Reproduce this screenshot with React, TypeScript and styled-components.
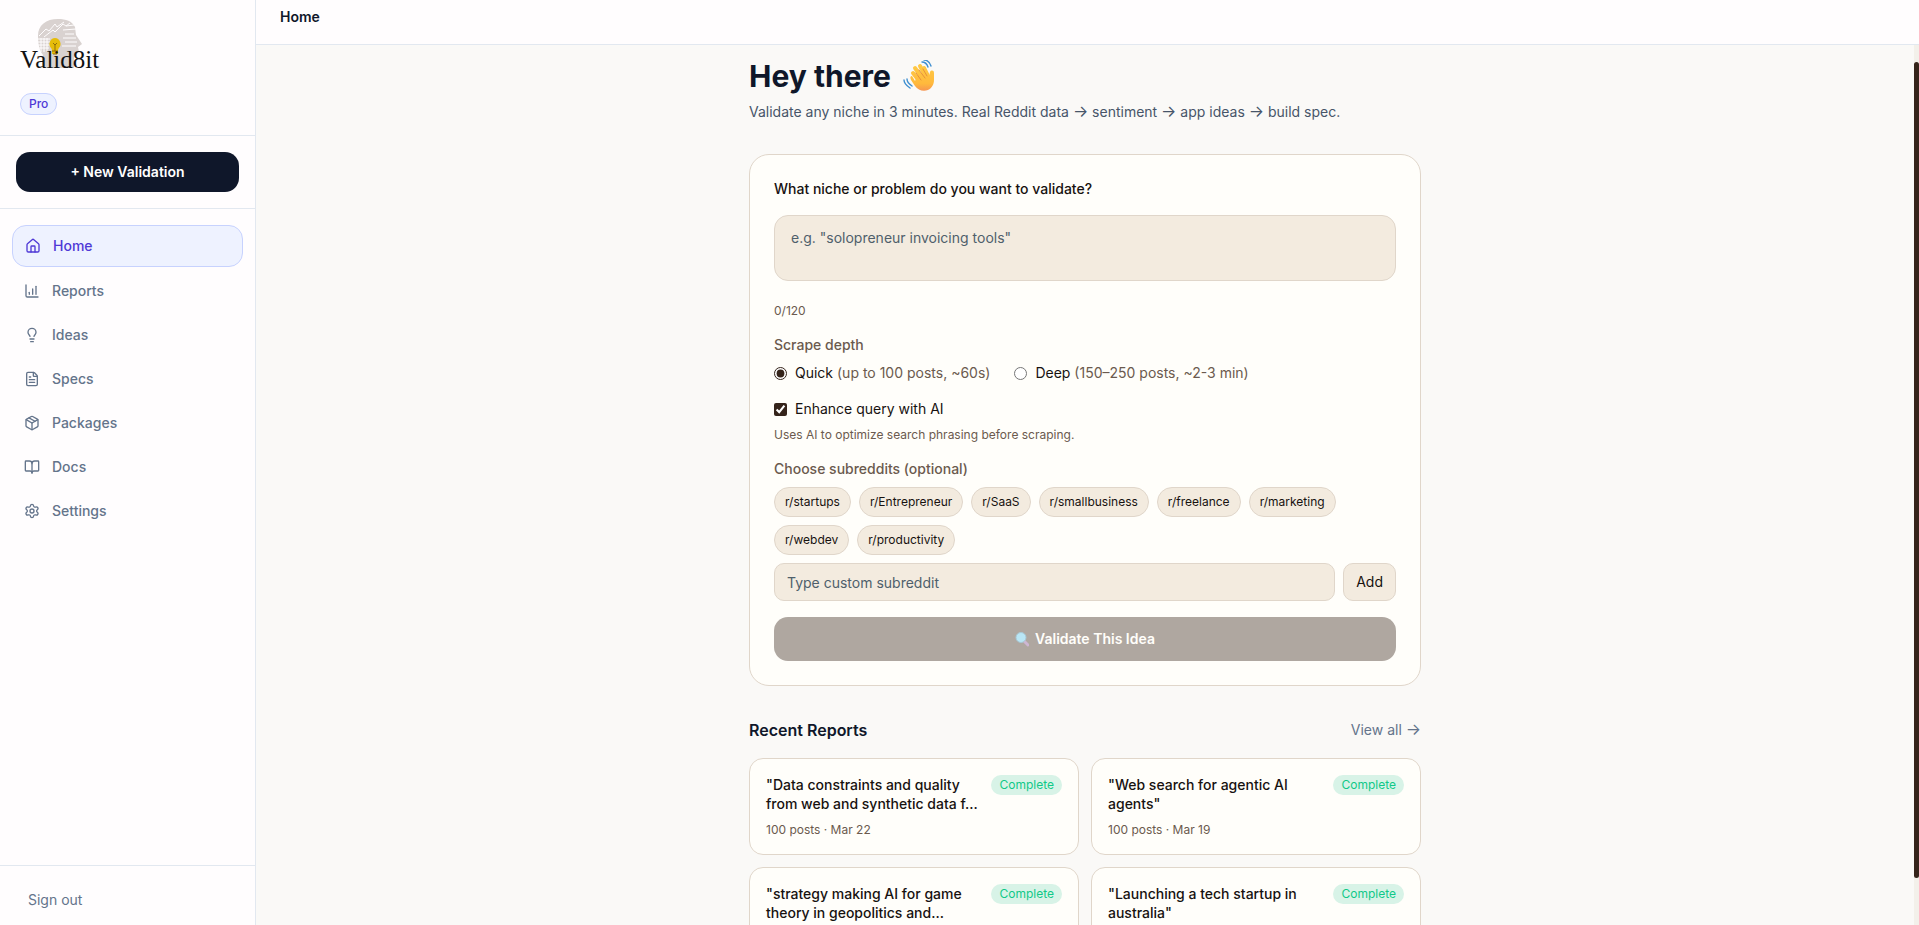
import React, { useState } from "react";
import styled, { createGlobalStyle, css } from "styled-components";
import { House, ChartColumnIncreasing, Lightbulb, FileText, Package, BookOpen, Settings } from "lucide-react";

const c = {
  page: "#faf9f7",
  panel: "#fffdfe",
  line: "#e2e8f0",
  navy: "#0f172a",
  slate: "#64748b",
  slateDark: "#475569",
  indigo: "#4f39d6",
  indigoSoft: "#eef2ff",
  indigoLine: "#c7d2fe",
  card: "#fffefa",
  cardLine: "#e0d6ca",
  sand: "#f3ebdf",
  ink: "#171210",
  brown: "#6b5a4e",
  espresso: "#35241a",
};

const Global = createGlobalStyle`
  *, *::before, *::after { box-sizing: border-box; }
  body { margin: 0; font-family: Inter, "Liberation Sans", sans-serif; font-size: 14px; line-height: 20px; color: ${c.ink}; background: ${c.page}; }
  button, input, textarea { font: inherit; color: inherit; margin: 0; }
  button { cursor: pointer; }
  a { text-decoration: none; color: inherit; }
  h1, h2, h3, p, fieldset { margin: 0; padding: 0; border: 0; min-width: 0; }
`;

const Shell = styled.div`
  display: flex;
  height: 100vh;
  overflow: hidden;
`;
const Sidebar = styled.aside`
  display: flex;
  flex-direction: column;
  flex: 0 0 256px;
  background: ${c.panel};
  border-right: 1px solid ${c.line};
`;
const Brand = styled.div`
  display: flex;
  flex-direction: column;
  align-items: flex-start;
  gap: 16px;
  padding: 16px 20px 20px;
  border-bottom: 1px solid ${c.line};
`;
const LogoSvg = styled.svg`
  display: block;
  width: 80px;
  height: 61px;
  overflow: visible;
`;
const Plan = styled.span`
  padding: 1px 8px;
  border: 1px solid ${c.indigoLine};
  border-radius: 11px;
  background: ${c.indigoSoft};
  color: ${c.indigo};
  font-size: 12px;
  line-height: 18px;
  font-weight: 500;
`;
const NewWrap = styled.div`
  padding: 16px;
  border-bottom: 1px solid ${c.line};
`;
const NewButton = styled.button`
  width: 100%;
  height: 40px;
  border: 0;
  border-radius: 14px;
  background: ${c.navy};
  color: #fff;
  font-weight: 600;
`;
const Nav = styled.nav`
  display: flex;
  flex-direction: column;
  flex: 1;
  gap: 4px;
  padding: 16px 12px;
`;
const NavItem = styled.a<{ $active?: boolean }>`
  display: flex;
  align-items: center;
  gap: 12px;
  padding: 10px 12px;
  border-radius: 14px;
  font-weight: 500;
  color: ${c.slate};
  ${(p) => p.$active && css`
    color: ${c.indigo};
    background: ${c.indigoSoft};
    border: 1px solid ${c.indigoLine};
  `}
`;
const SidebarFoot = styled.div`
  padding: 16px 16px 7px;
  border-top: 1px solid ${c.line};
`;
const SignOut = styled.button`
  padding: 8px 12px;
  border: 0;
  background: none;
  color: ${c.slate};
`;

const Main = styled.div`
  display: flex;
  flex-direction: column;
  flex: 1;
  min-width: 0;
`;
const TopBar = styled.header`
  padding: 7px 24px 17px;
  background: ${c.panel};
  border-bottom: 1px solid ${c.line};
  color: ${c.navy};
  font-weight: 600;
`;
const Viewport = styled.div`
  display: flex;
  flex: 1;
  min-height: 0;
`;
const Scroller = styled.main`
  flex: 1;
  min-width: 0;
  overflow-y: auto;
  scrollbar-width: none;
`;
const Track = styled.div`
  flex: 0 0 5px;
  padding: 17px 0 47px;
  background: #f3f0ea;
`;
const Thumb = styled.div`
  height: 100%;
  border-radius: 3px;
  background: ${c.espresso};
`;
const Column = styled.div`
  max-width: 672px;
  margin: 0 auto;
  padding: 13px 0 32px;
`;
const Title = styled.h1`
  display: flex;
  align-items: center;
  gap: 12px;
  font-size: 30px;
  line-height: 36px;
  font-weight: 700;
  color: ${c.navy};
`;
const Lead = styled.p`
  margin-top: 8px;
  color: ${c.slateDark};
`;
const Arrow = styled.span`
  font-size: 16px;
  line-height: 16px;
`;
const FormCard = styled.form`
  display: flex;
  flex-direction: column;
  margin-top: 32px;
  padding: 24px;
  border: 1px solid ${c.cardLine};
  border-radius: 20px;
  background: ${c.card};
`;
const Question = styled.label`
  font-weight: 500;
`;
const field = css`
  border: 1px solid ${c.cardLine};
  background: ${c.sand};
  outline: 0;
  &::placeholder { color: #4f5f6b; opacity: 1; }
`;
const NicheBox = styled.textarea`
  ${field}
  display: block;
  width: 100%;
  height: 66px;
  margin-top: 16px;
  padding: 12px 16px;
  border-radius: 14px;
  resize: none;
`;
const Small = styled.p<{ $top: number }>`
  margin-top: ${(p) => p.$top}px;
  font-size: 12px;
  line-height: 16px;
  color: ${c.brown};
`;
const Group = styled.fieldset`
  margin-top: 16px;
`;
const GroupName = styled.legend`
  padding: 0;
  margin-bottom: 8px;
  font-weight: 500;
  color: ${c.brown};
`;
const Options = styled.div`
  display: flex;
  gap: 24px;
`;
const Option = styled.label`
  display: flex;
  align-items: center;
  gap: 8px;
`;
const Hint = styled.span`
  color: ${c.brown};
`;
const EnhanceRow = styled(Option)`
  margin-top: 16px;
`;
const Tick = styled.input`
  width: 13px;
  height: 13px;
  accent-color: ${c.espresso};
`;
const Chips = styled.div`
  display: flex;
  flex-wrap: wrap;
  gap: 8px;
`;
const Chip = styled.button`
  padding: 6px 10px;
  border: 1px solid ${c.cardLine};
  border-radius: 15px;
  background: ${c.sand};
  font-size: 12px;
  line-height: 16px;
`;
const CustomRow = styled.div`
  display: flex;
  gap: 8px;
  margin-top: 8px;
`;
const CustomInput = styled.input`
  ${field}
  flex: 1;
  min-width: 0;
  height: 38px;
  padding: 8px 12px;
  border-radius: 10px;
`;
const AddButton = styled.button`
  padding: 8px 12px;
  border: 1px solid ${c.cardLine};
  border-radius: 10px;
  background: ${c.sand};
`;
const Submit = styled.button`
  display: flex;
  align-items: center;
  justify-content: center;
  gap: 6px;
  height: 44px;
  margin-top: 16px;
  border: 0;
  border-radius: 14px;
  background: #afa7a0;
  color: #fffefa;
  font-weight: 600;
`;
const SectionHead = styled.div`
  display: flex;
  align-items: center;
  justify-content: space-between;
  margin-top: 32px;
`;
const SectionTitle = styled.h2`
  font-size: 16px;
  line-height: 24px;
  font-weight: 600;
  color: ${c.navy};
`;
const ViewAll = styled.a`
  color: ${c.slate};
`;
const Reports = styled.div`
  display: grid;
  grid-template-columns: 1fr 1fr;
  gap: 12px;
  margin-top: 16px;
`;
const Report = styled.a`
  padding: 16px;
  border: 1px solid ${c.cardLine};
  border-radius: 14px;
  background: ${c.card};
`;
const ReportTop = styled.div`
  display: flex;
  align-items: flex-start;
  justify-content: space-between;
  gap: 8px;
`;
const ReportTitle = styled.h3`
  font-size: 14px;
  line-height: 19px;
  font-weight: 500;
`;
const Badge = styled.span`
  padding: 2px 8px;
  border-radius: 10px;
  background: #d8f3e7;
  color: #10c988;
  font-size: 12px;
  line-height: 16px;
`;
const Meta = styled.p`
  margin-top: 8px;
  font-size: 12px;
  line-height: 17px;
  color: ${c.brown};
`;

function Logo() {
  return (
    <LogoSvg viewBox="0 0 80 61" role="img" aria-label="Valid8it">
      <path d="M18 20C18 9 26 3 38 3c8 0 14 2 17 8l1 8 6 9-4 3 1 5-5 4v12H24c-3-3-2-10-1-13-4-5-5-12-5-19z" fill="#d9d2d0" />
      <g stroke="#fffdfe" strokeWidth="1" fill="none">
        <path d="M19 20l7-7 3 2 6-7 2 3 7-5M24 21l9-7 2 2 8-8 3 2 4-3M46 10l8-1M43 14l13-1M45 18l9 0M43 22h13M45 26h12M42 30h14" />
        <path d="M18 23h12M18 26h12M18 29h12M19 32h10M21 22v14M24 22v14M27 22v14" />
      </g>
      <path d="M35 22a6 6 0 0 1 4 10c-1 1-1 2-1 6h-6c0-4 0-5-1-6a6 6 0 0 1 4-10z" fill="#e6bd0a" />
      <path d="M33 27l2 2 2-2M35 29v6M32 35h6M33 38h4" stroke="#8f6e08" strokeWidth="1" fill="none" />
      <text x="0" y="52" fontFamily="'Liberation Serif', serif" fontSize="25" fill="#111">Valid8it</text>
    </LogoSvg>
  );
}

function Wave() {
  return (
    <svg width="32" height="32" viewBox="0 0 32 32" aria-hidden="true">
      <defs>
        <linearGradient id="hand" gradientUnits="userSpaceOnUse" x1="0" y1="4" x2="0" y2="32">
          <stop offset="0" stopColor="#ffcb45" />
          <stop offset="0.7" stopColor="#ffb93c" />
          <stop offset="1" stopColor="#f59055" />
        </linearGradient>
      </defs>
      <g stroke="url(#hand)" strokeWidth="4" strokeLinecap="round">
        <path d="M10 13l7 9M12 8l8 11M17 6l7 13M21 8l5 10" />
      </g>
      <path d="M9 16c-2 0-2 2-1 4l4 6c3 4 8 6 13 4 4-2 6-6 6-10V13c0-3-3-3-4-1l-1 5-11-3-3 7z" fill="url(#hand)" />
      <path d="M13 13l5 7M16 10l6 8M20 9l4 7" stroke="#e8923a" strokeWidth="1" fill="none" strokeLinecap="round" />
      <path d="M19 2c3 0 5 2 6 5M21 0c4 0 6 3 7 6M4 19c0 3 2 5 5 7M1 20c0 4 3 6 6 8" stroke="#3f8fd0" strokeWidth="1.4" fill="none" strokeLinecap="round" />
    </svg>
  );
}

function Lens() {
  return (
    <svg width="14" height="16" viewBox="0 0 14 16" aria-hidden="true">
      <path d="M9 10l4 4" stroke="#cdb6d2" strokeWidth="3" strokeLinecap="round" />
      <circle cx="6" cy="6.500" r="5" fill="#b9e6f5" stroke="#a9c9d6" />
    </svg>
  );
}

const navItems = [
  { name: "Home", Icon: House },
  { name: "Reports", Icon: ChartColumnIncreasing },
  { name: "Ideas", Icon: Lightbulb },
  { name: "Specs", Icon: FileText },
  { name: "Packages", Icon: Package },
  { name: "Docs", Icon: BookOpen },
  { name: "Settings", Icon: Settings },
];
const subs = ["startups", "Entrepreneur", "SaaS", "smallbusiness", "freelance", "marketing", "webdev", "productivity"];
const reports = [
  { title: '"Data constraints and quality from web and synthetic data f…', meta: "100 posts · Mar 22" },
  { title: '"Web search for agentic AI agents"', meta: "100 posts · Mar 19" },
  { title: '"strategy making AI for game theory in geopolitics and…', meta: "100 posts · Mar 18" },
  { title: '"Launching a tech startup in australia"', meta: "100 posts · Mar 17" },
];

export default function App() {
  const [niche, setNiche] = useState("");
  const [depth, setDepth] = useState("quick");
  const [enhance, setEnhance] = useState(true);
  return (
    <>
      <Global />
      <Shell>
        <Sidebar>
          <Brand>
            <Logo />
            <Plan>Pro</Plan>
          </Brand>
          <NewWrap><NewButton type="button">+ New Validation</NewButton></NewWrap>
          <Nav>
            {navItems.map(({ name, Icon }, i) => (
              <NavItem key={name} href={`#${name.toLowerCase()}`} $active={i === 0}>
                <Icon size={16} />
                {name}
              </NavItem>
            ))}
          </Nav>
          <SidebarFoot><SignOut type="button">Sign out</SignOut></SidebarFoot>
        </Sidebar>
        <Main>
          <TopBar>Home</TopBar>
          <Viewport>
            <Scroller>
              <Column>
                <Title>Hey there <Wave /></Title>
                <Lead>
                  Validate any niche in 3 minutes. Real Reddit data <Arrow>→</Arrow> sentiment <Arrow>→</Arrow> app ideas <Arrow>→</Arrow> build spec.
                </Lead>
                <FormCard onSubmit={(e) => e.preventDefault()}>
                  <Question htmlFor="niche">What niche or problem do you want to validate?</Question>
                  <NicheBox id="niche" rows={2} maxLength={120} value={niche} onChange={(e) => setNiche(e.target.value)} placeholder={'e.g. "solopreneur invoicing tools"'} />
                  <Small $top={22}>{niche.length}/120</Small>
                  <Group>
                    <GroupName>Scrape depth</GroupName>
                    <Options>
                      <Option>
                        <Tick type="radio" name="depth" checked={depth === "quick"} onChange={() => setDepth("quick")} />
                        <span>Quick <Hint>(up to 100 posts, ~60s)</Hint></span>
                      </Option>
                      <Option>
                        <Tick type="radio" name="depth" checked={depth === "deep"} onChange={() => setDepth("deep")} />
                        <span>Deep <Hint>(150–250 posts, ~2-3 min)</Hint></span>
                      </Option>
                    </Options>
                  </Group>
                  <EnhanceRow>
                    <Tick type="checkbox" checked={enhance} onChange={(e) => setEnhance(e.target.checked)} />
                    Enhance query with AI
                  </EnhanceRow>
                  <Small $top={8}>Uses AI to optimize search phrasing before scraping.</Small>
                  <Group>
                    <GroupName>Choose subreddits (optional)</GroupName>
                    <Chips>{subs.map((s) => <Chip key={s} type="button">r/{s}</Chip>)}</Chips>
                    <CustomRow>
                      <CustomInput type="text" aria-label="Custom subreddit" placeholder="Type custom subreddit" />
                      <AddButton type="button">Add</AddButton>
                    </CustomRow>
                  </Group>
                  <Submit type="submit"><Lens />Validate This Idea</Submit>
                </FormCard>
                <SectionHead>
                  <SectionTitle>Recent Reports</SectionTitle>
                  <ViewAll href="#reports">View all <Arrow>→</Arrow></ViewAll>
                </SectionHead>
                <Reports>
                  {reports.map((r) => (
                    <Report key={r.title} href="#report">
                      <ReportTop>
                        <ReportTitle>{r.title}</ReportTitle>
                        <Badge>Complete</Badge>
                      </ReportTop>
                      <Meta>{r.meta}</Meta>
                    </Report>
                  ))}
                </Reports>
              </Column>
            </Scroller>
            <Track><Thumb /></Track>
          </Viewport>
        </Main>
      </Shell>
    </>
  );
}
